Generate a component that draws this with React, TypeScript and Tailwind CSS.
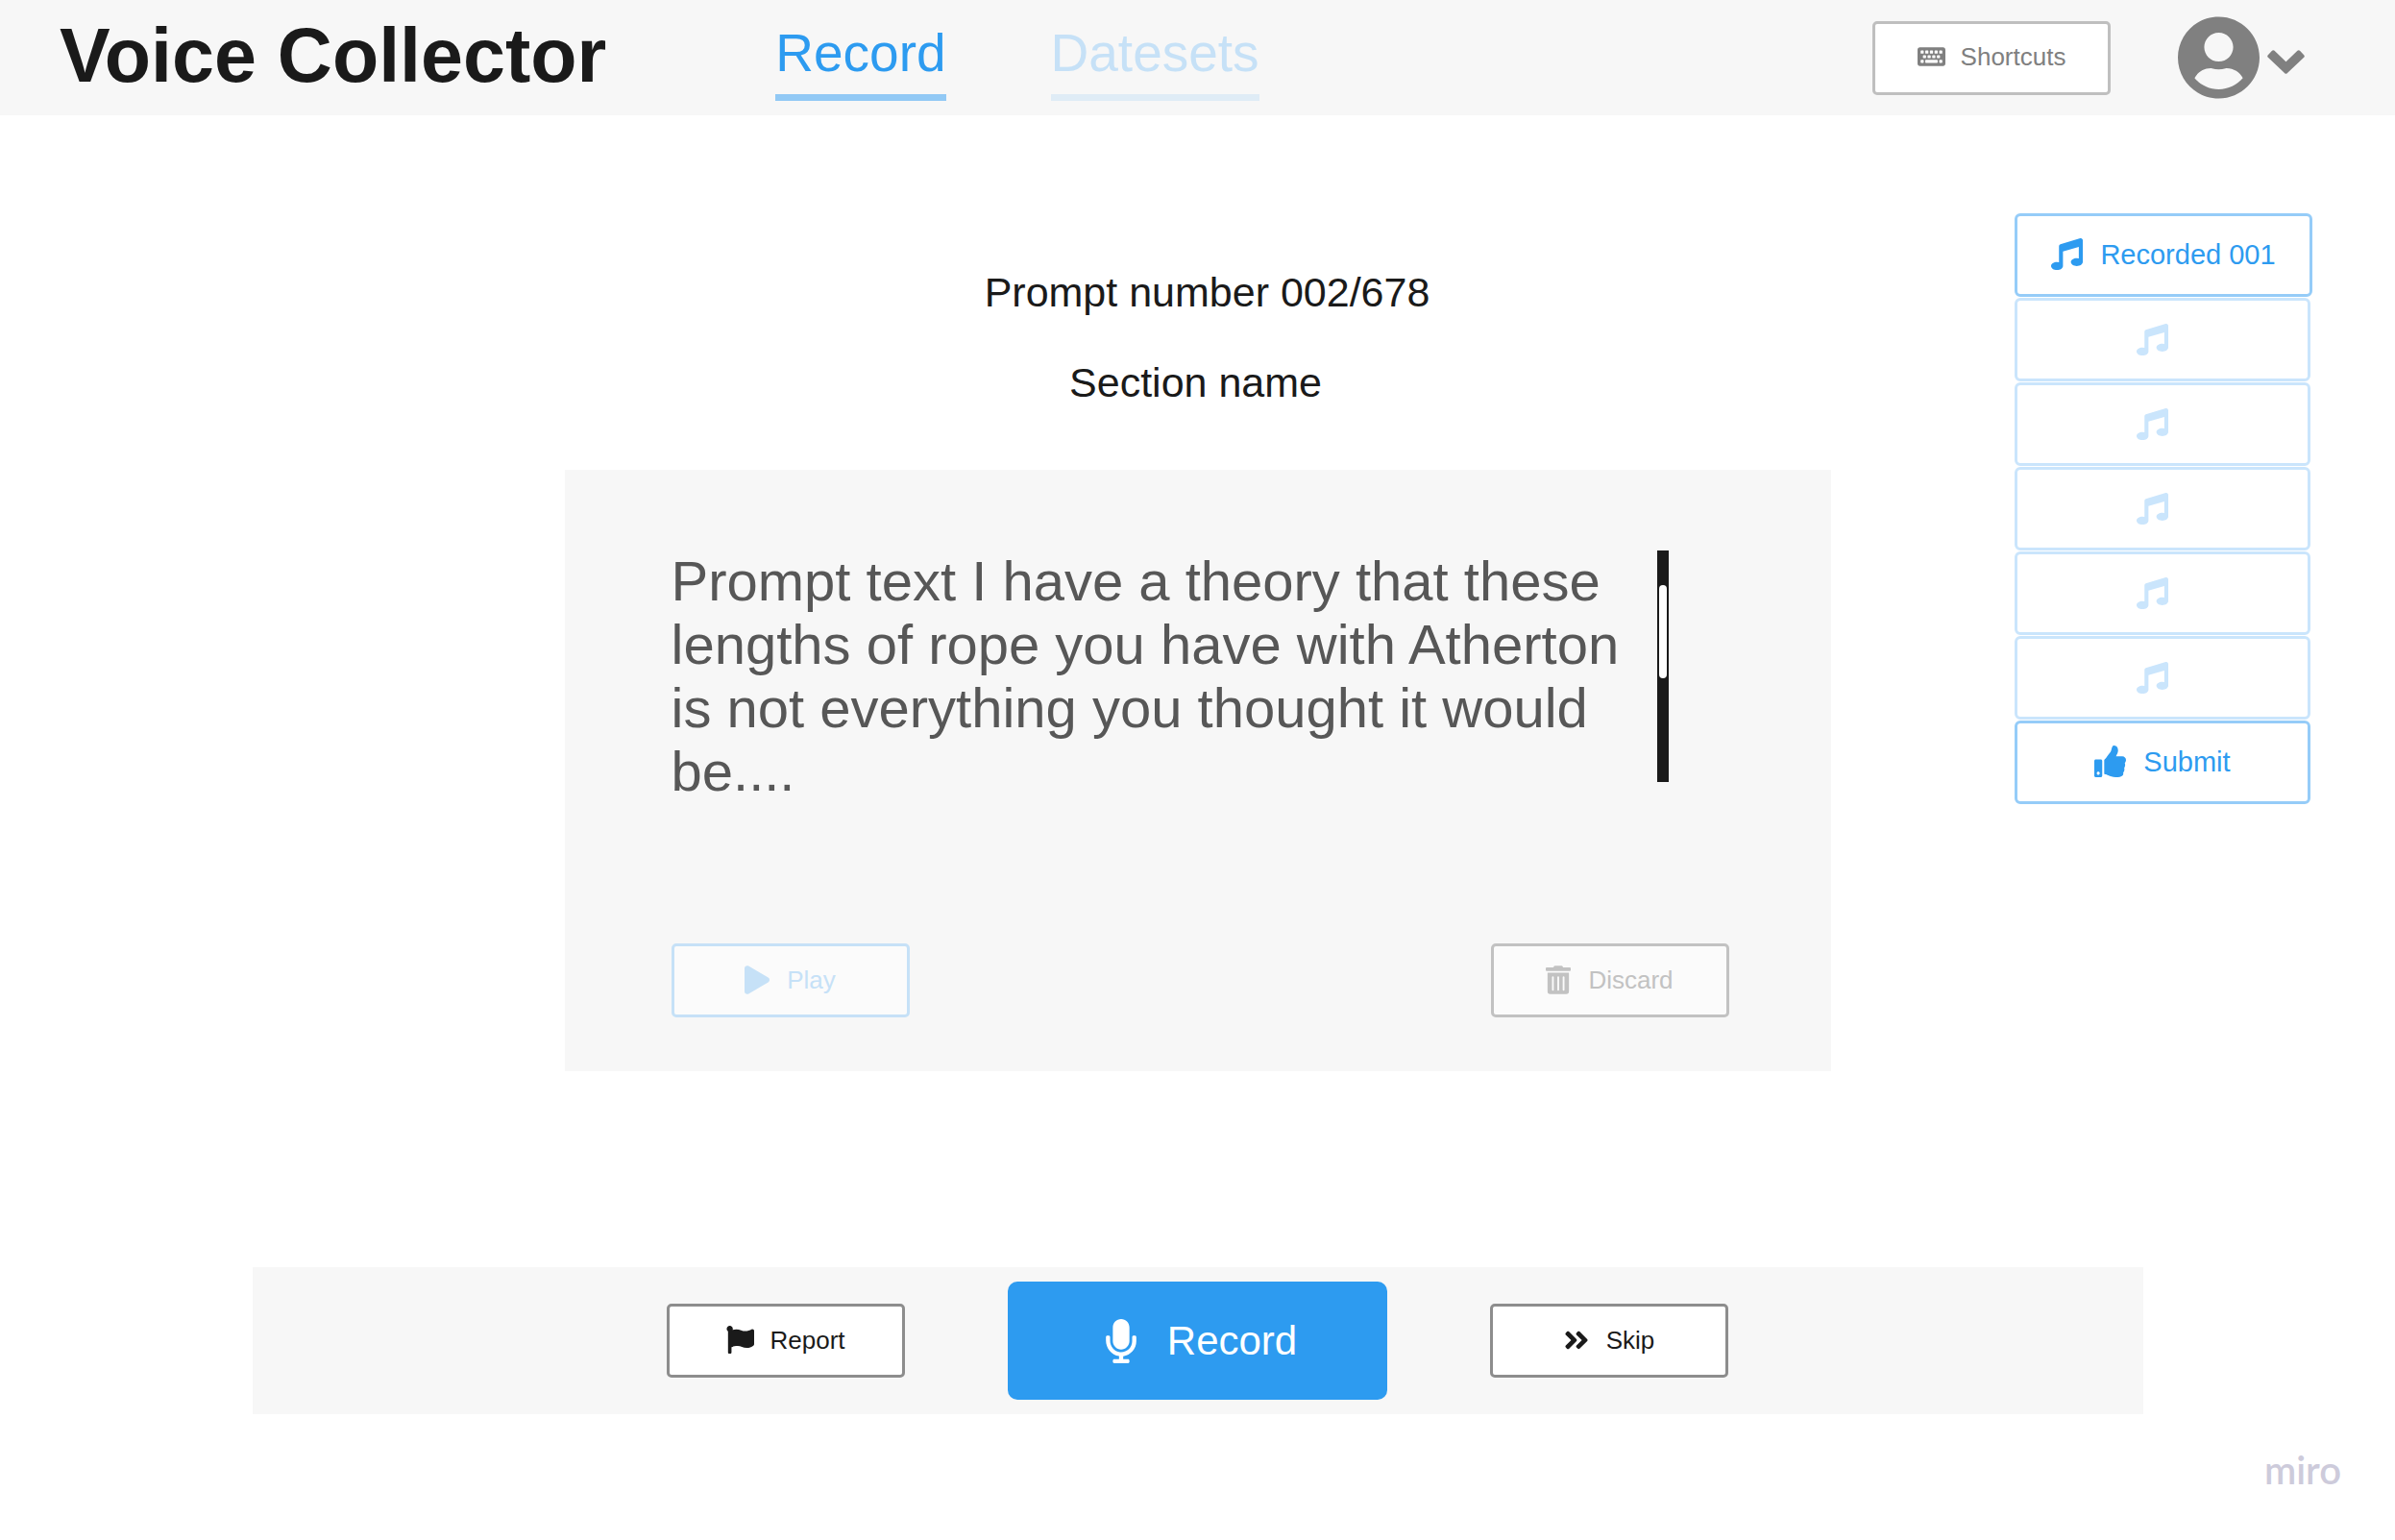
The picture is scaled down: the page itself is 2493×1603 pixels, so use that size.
import type { ReactNode } from "react";
import {
  FaAngleDoubleRight,
  FaFlag,
  FaKeyboard,
  FaMicrophone,
  FaMusic,
  FaPlay,
  FaThumbsUp,
  FaTrashAlt,
  FaUserCircle,
} from "react-icons/fa";

const tones = {
  gray: "border-[#bfbfbf] bg-white text-[#808080]",
  paleBlue: "border-[#c6e1f7] bg-[#fbfbfb] text-[#c6e1f7]",
  paleGray: "border-[#c2c2c2] bg-[#fbfbfb] text-[#c2c2c2]",
  dark: "border-[#8d8d8d] bg-white text-[#1a1a1a]",
};

function ActionButton({ tone, icon, label }: { tone: keyof typeof tones; icon: ReactNode; label: string }) {
  return (
    <button
      type="button"
      className={`flex h-[77px] w-[248px] items-center justify-center gap-4 rounded-[5px] border-3 pb-0.5 text-[26px] leading-8 ${tones[tone]}`}
    >
      {icon}
      <span>{label}</span>
    </button>
  );
}

function EmptySlot({ number }: { number: number }) {
  return (
    <li>
      <button
        type="button"
        aria-label={`Empty slot ${number}`}
        className="flex h-[87px] w-[308px] items-center justify-center rounded-md border-3 border-[#cae5fc] bg-white pr-[22px] text-[#cae5fc]"
      >
        <FaMusic className="h-[33px] w-[33px]" />
      </button>
    </li>
  );
}

function Chevron() {
  return (
    <svg viewBox="0 0 39 25" className="mt-2 h-[25px] w-[39px]" aria-hidden="true">
      <path
        d="M2.1 6.4 6.3 2.1 19.5 14.8 32.7 2.1 36.9 6.4 19.5 22.9Z"
        fill="currentColor"
        stroke="currentColor"
        strokeWidth="3.6"
        strokeLinejoin="round"
      />
    </svg>
  );
}

export default function App() {
  return (
    <div className="min-h-screen bg-white font-['Liberation_Sans',Arial,sans-serif] text-[#1a1a1a]">
      <header className="flex h-[120px] items-center bg-[#f7f7f7] pr-[94px] pl-[62px]">
        <h1 className="pb-1 text-[79px] leading-[90px] font-bold whitespace-nowrap">Voice Collector</h1>
        <nav className="ml-44 flex gap-[109px] pt-[9px] text-[55px] leading-[62px]">
          <a href="#record" aria-current="page" className="border-b-7 border-[#92c9f5] pb-3 text-[#2d9bf0]">
            Record
          </a>
          <a href="#datesets" className="border-b-7 border-[#dfecf6] pb-3 text-[#c6e1f7]">
            Datesets
          </a>
        </nav>
        <div className="ml-auto flex items-center">
          <ActionButton tone="gray" icon={<FaKeyboard className="h-[26px] w-[29px]" />} label="Shortcuts" />
          <button type="button" aria-label="Account menu" className="ml-[70px] flex items-center gap-2 text-[#808080]">
            <FaUserCircle className="h-[88px] w-[85px]" />
            <Chevron />
          </button>
        </div>
      </header>

      <main>
        <div className="grid grid-cols-[minmax(0,1fr)_minmax(0,1318px)_minmax(0,1fr)]">
          <section className="col-start-2 pt-[159px]">
            <div className="flex flex-col items-center gap-11 text-[43px] leading-[50px]">
              <p className="pl-5">Prompt number 002/678</p>
              <h2 className="pr-1">Section name</h2>
            </div>
            <div className="mt-[66px] bg-[#f7f7f7] pt-[83px] pr-[106px] pb-14 pl-[111px]">
              <div className="flex items-start">
                <p className="w-[1026px] text-[58px] leading-[66px] text-[#575757]">
                  Prompt text I have a theory that these lengths of rope you have with Atherton is not everything you
                  thought it would be....
                </p>
                <div className="mt-px h-[241px] w-3 bg-[#1a1a1a] px-0.5 pt-9">
                  <div className="h-[97px] rounded-full bg-white" />
                </div>
              </div>
              <div className="mt-[146px] flex justify-between">
                <ActionButton tone="paleBlue" icon={<FaPlay className="mr-0.5 h-[30px] w-[26px]" />} label="Play" />
                <ActionButton
                  tone="paleGray"
                  icon={<FaTrashAlt className="mr-0.5 h-[30px] w-[26px]" />}
                  label="Discard"
                />
              </div>
            </div>
          </section>

          <aside className="mt-[102px] mr-[86px] justify-self-end">
            <ul className="flex w-[310px] flex-col gap-px">
              <li>
                <button
                  type="button"
                  className="flex h-[87px] w-full items-center justify-center gap-[18px] rounded-md border-3 border-[#95ccf8] bg-white pb-0.5 text-[29px] leading-9 text-[#2d9bf0]"
                >
                  <FaMusic className="h-[33px] w-[33px]" />
                  <span>Recorded 001</span>
                </button>
              </li>
              {[2, 3, 4, 5, 6].map((n) => (
                <EmptySlot key={n} number={n} />
              ))}
              <li>
                <button
                  type="submit"
                  className="flex h-[87px] w-[308px] items-center justify-center gap-[18px] rounded-md border-3 border-[#95ccf8] bg-white pb-0.5 text-[29px] leading-9 text-[#2d9bf0]"
                >
                  <FaThumbsUp className="h-[33px] w-[33px]" />
                  <span>Submit</span>
                </button>
              </li>
            </ul>
          </aside>
        </div>

        <div className="mx-auto mt-[204px] flex h-[153px] max-w-[1968px] items-center justify-center gap-[107px] bg-[#f7f7f7]">
          <ActionButton tone="dark" icon={<FaFlag className="h-[29px] w-[29px]" />} label="Report" />
          <button
            type="button"
            className="flex h-[123px] w-[395px] items-center justify-center gap-8 rounded-[10px] bg-[#2d9bf0] pl-2 text-[42px] leading-[50px] text-white"
          >
            <FaMicrophone className="h-[46px] w-8" />
            <span>Record</span>
          </button>
          <ActionButton
            tone="dark"
            icon={<FaAngleDoubleRight className="mr-0.5 h-[30px] w-[26px]" />}
            label="Skip"
          />
        </div>
      </main>

      <footer className="mt-[33px] flex justify-end pr-14 font-[Lato,sans-serif] text-[40px] leading-[50px] font-semibold text-[#cdcbdb]">
        miro
      </footer>
    </div>
  );
}
